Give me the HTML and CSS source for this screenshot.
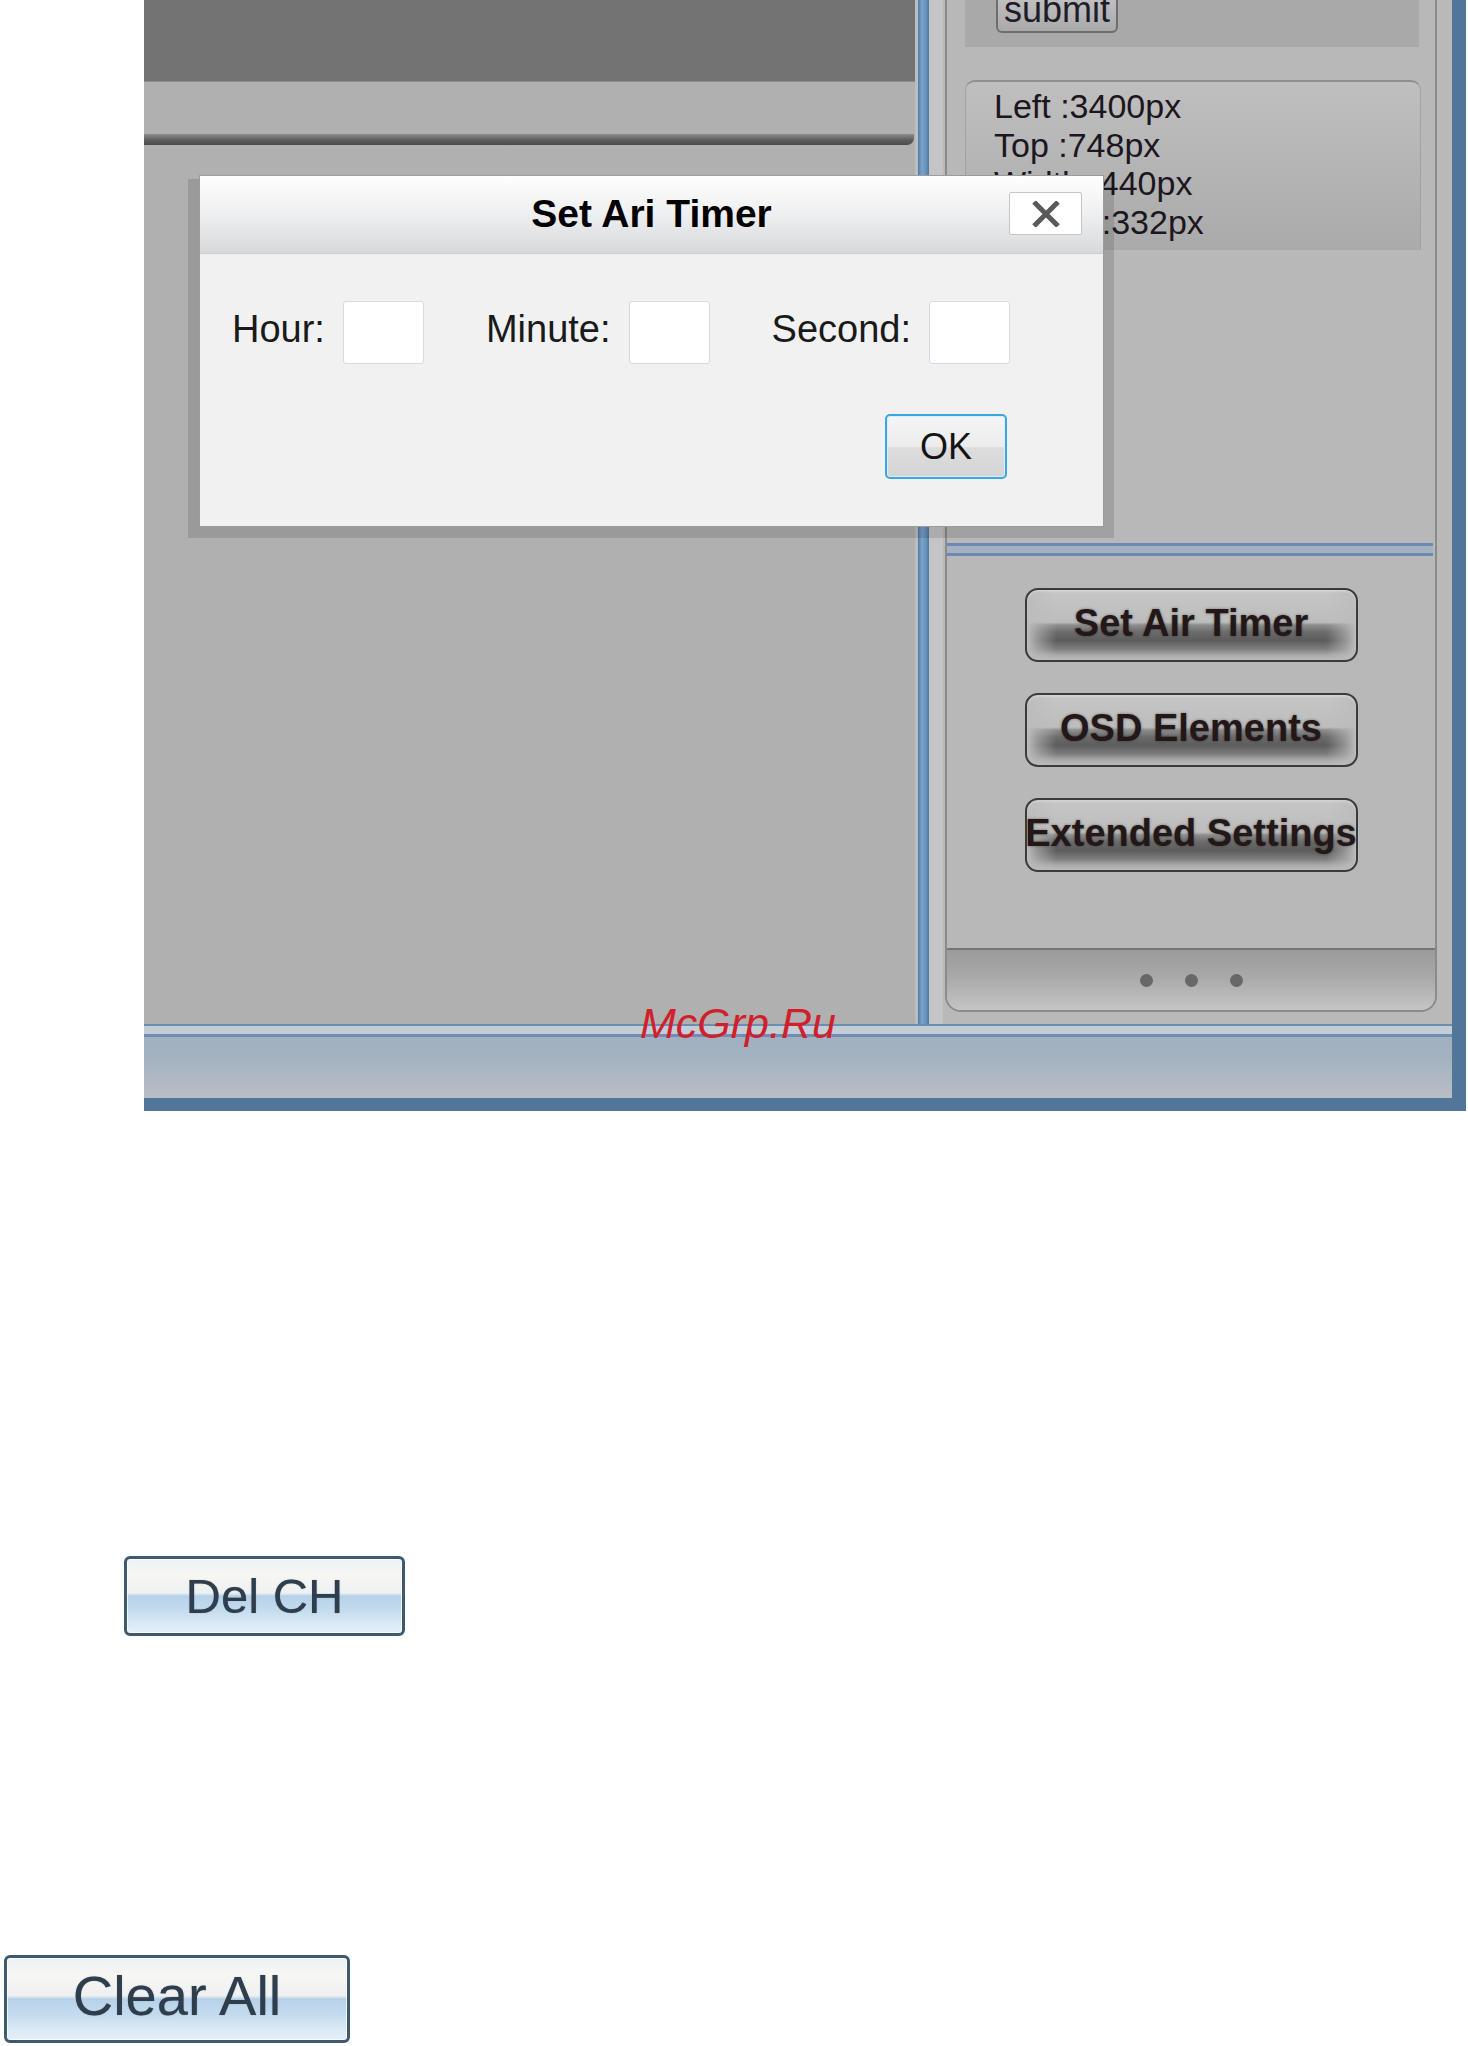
FILE: index.html
```html
<!DOCTYPE html>
<html lang="en">
<head>
<meta charset="utf-8">
<title>Set Ari Timer</title>
<link rel="stylesheet" href="styles.css">
</head>
<body>
<div class="app">
  <div class="workspace">
    <div class="canvas">
      <div class="preview"></div>
      <div class="band"></div>
      <div class="rule"></div>
    </div>
    <div class="splitter"></div>
    <aside class="sidebar">
      <div class="panel">
        <div class="panel-top">
          <div class="submit-box"><button class="submit-btn">submit</button></div>
          <div class="info-box">
            <div class="info-line">Left :3400px</div>
            <div class="info-line">Top :748px</div>
            <div class="info-line">Width :440px</div>
            <div class="info-line">Height :332px</div>
          </div>
        </div>
        <div class="separator"></div>
        <div class="actions">
          <button class="action"><span>Set Air Timer</span></button>
          <button class="action"><span>OSD Elements</span></button>
          <button class="action"><span>Extended Settings</span></button>
        </div>
        <div class="panel-footer">
          <span class="dot"></span><span class="dot"></span><span class="dot"></span>
        </div>
      </div>
    </aside>
  </div>
  <div class="statusbar"></div>

  <div class="dialog-wrap">
    <div class="dialog">
      <div class="dialog-title">
        <span class="title-text">Set Ari Timer</span>
        <button class="close-btn" aria-label="Close">
          <svg width="28" height="26" viewBox="0 0 28 26"><path d="M2 1 L26 25 M26 1 L2 25" stroke="#5a5a5a" stroke-width="5" fill="none"/></svg>
        </button>
      </div>
      <div class="dialog-body">
        <div class="fields">
          <label class="field"><span class="field-label">Hour:</span><input class="field-input" type="text"></label>
          <label class="field"><span class="field-label">Minute:</span><input class="field-input" type="text"></label>
          <label class="field"><span class="field-label">Second:</span><input class="field-input" type="text"></label>
        </div>
        <div class="dialog-actions"><button class="ok-btn">OK</button></div>
      </div>
    </div>
  </div>

  <div class="watermark">McGrp.Ru</div>
</div>

<div class="bottom-actions">
  <button class="blue-btn del-btn">Del CH</button>
  <button class="blue-btn clear-btn">Clear All</button>
</div>
</body>
</html>
```

FILE: styles.css
```css
* { box-sizing: border-box; }

body {
  margin: 0;
  background: #ffffff;
  font-family: "Liberation Sans", Arial, sans-serif;
  color: #1a1a1a;
}

button, input { font-family: inherit; }

.app {
  position: relative;
  margin-left: 144px;
  width: 1322px;
  border-right: 14px solid #52769a;
  border-bottom: 13px solid #52769a;
  display: flex;
  flex-direction: column;
}

.workspace {
  display: flex;
  height: 1024px;
}

/* left canvas */
.canvas {
  width: 774px;
  background: #b0b0b0;
  border-right: 3px solid #bdbdbd;
}
.preview {
  height: 82px;
  width: 771px;
  background: #737373;
  border-bottom: 1px solid #8c8c8c;
}
.band {
  height: 52px;
}
.rule {
  height: 11px;
  width: 770px;
  background: linear-gradient(to bottom, #8e8e8e 0, #777 25%, #5d5d5d 55%, #4b4b4b 100%);
  border-bottom-right-radius: 7px;
}

.splitter {
  width: 11px;
  background: linear-gradient(to right, #4f7ca8 0, #7ca3c9 35%, #6b94bc 70%, #4c77a2 100%);
}

/* sidebar */
.sidebar {
  flex: 1;
  padding: 0 15px 12px 16px;
  background: linear-gradient(to right, #c4c4c4 0, #c4c4c4 14px, #b9b9b9 14px);
  display: flex;
}
.panel {
  flex: 1;
  display: flex;
  flex-direction: column;
  border-left: 2px solid #8b8b8b;
  border-right: 2px solid #8b8b8b;
  border-bottom: 2px solid #8b8b8b;
  border-radius: 0 0 16px 16px;
  overflow: hidden;
  background: #b8b8b8;
}
.panel-top {
  padding: 0 16px 0 18px;
}
.submit-box {
  height: 47px;
  background: #a9a9a9;
  padding-left: 31px;
  overflow: hidden;
}
.submit-btn {
  display: block;
  margin-top: -14px;
  height: 47px;
  padding: 0 6px;
  border: 2px solid #6e6e6e;
  border-radius: 6px;
  background: linear-gradient(to bottom, #c8c8c8, #a9a9a9);
  font-size: 36px;
  line-height: 34px;
  color: #1f1c2a;
}
.info-box {
  margin-top: 33px;
  height: 170px;
  margin-right: -2px;
  border-top: 2px solid #8f8f8f;
  border-left: 1px solid #a2a2a2;
  border-right: 1px solid #a2a2a2;
  border-radius: 10px 10px 0 0;
  background: linear-gradient(to bottom, #bfbfbf, #aaaaaa);
  padding: 5px 0 0 28px;
}
.info-line {
  font-size: 34px;
  line-height: 38.5px;
  color: #1c1620;
  white-space: nowrap;
}

.separator {
  margin-top: 293px;
  margin-right: 2px;
  height: 13px;
  border-top: 3px solid #6a8ab2;
  border-bottom: 3px solid #6a8ab2;
  background: #a7b2c0;
}

.actions {
  display: flex;
  flex-direction: column;
  align-items: center;
  gap: 31px;
  padding-top: 32px;
}
.action {
  width: 333px;
  height: 74px;
  padding: 0;
  display: flex;
  align-items: center;
  justify-content: center;
  overflow: hidden;
  white-space: nowrap;
  border: 2px solid #3b3b3b;
  border-radius: 13px;
  box-shadow: inset 0 2px 2px rgba(255,255,255,0.25);
  background:
    linear-gradient(to right, #bcbcbc 0, rgba(188,188,188,0.6) 3%, rgba(188,188,188,0) 9%, rgba(188,188,188,0) 91%, rgba(188,188,188,0.6) 97%, #bcbcbc 100%),
    linear-gradient(to bottom, #c6c6c6 0%, #bdbdbd 46%, #8e8e8e 50%, #6c6c6c 60%, #5c5c5c 72%, #7c7c7c 84%, #aaaaaa 93%, #bababa 100%);
  font-size: 38px;
  font-weight: bold;
  color: #231717;
  text-shadow: 0 0 3px rgba(0,0,0,0.4);
}
.action span { flex: none; margin-top: -4px; }

.panel-footer {
  margin-top: auto;
  height: 62px;
  border-top: 2px solid #767676;
  background: linear-gradient(to bottom, #9b9b9b, #a9a9a9 45%, #c5c5c5 100%);
  display: flex;
  align-items: center;
  justify-content: center;
  gap: 32px;
}
.dot {
  width: 13px;
  height: 13px;
  border-radius: 50%;
  background: #686868;
}

.statusbar {
  height: 74px;
  background: linear-gradient(to bottom,
    #6d8db3 0, #6d8db3 2px,
    #c4ccd6 2px, #c4ccd6 10px,
    #6d8db3 10px, #6d8db3 13px,
    #a0b0c0 13px, #a4b2c0 45%, #b8bec3 100%);
}

/* dialog */
.dialog-wrap {
  position: absolute;
  left: 55px;
  top: 175px;
  width: 905px;
  z-index: 5;
}
.dialog-wrap::before {
  content: "";
  position: absolute;
  left: -11px;
  right: -10px;
  top: 4px;
  bottom: -11px;
  background: rgba(0,0,0,0.12);
  z-index: -1;
}
.dialog {
  height: 352px;
  border: 1px solid #9c9c9c;
  background: #f1f1f1;
}
.dialog-title {
  height: 78px;
  border-bottom: 1px solid #cdcdcd;
  background: linear-gradient(to bottom, #fefefe 0%, #eeeff0 50%, #d8d9db 100%);
  display: grid;
  grid-template-columns: 1fr auto 1fr;
  align-items: center;
}
.title-text {
  grid-column: 2;
  font-size: 39px;
  font-weight: bold;
  color: #000;
  line-height: 45px;
  margin-top: -2px;
}
.close-btn {
  grid-column: 3;
  justify-self: end;
  align-self: start;
  margin: 16px 21px 0 0;
  width: 73px;
  height: 43px;
  padding: 0;
  border: 1px solid #c6c6c6;
  border-radius: 2px;
  background: #ffffff;
  display: flex;
  align-items: center;
  justify-content: center;
}
.close-btn svg { display: block; }

.dialog-body {
  padding: 47px 96px 0 32px;
}
.fields {
  display: flex;
  align-items: center;
  gap: 62px;
}
.field {
  display: flex;
  align-items: center;
  gap: 18px;
}
.field-label {
  font-size: 38px;
  color: #1a1a1a;
  margin-top: -6px;
}
.field-input {
  width: 81px;
  height: 63px;
  border: 1px solid #d6dae2;
  border-radius: 3px;
  background: #fff;
  padding: 0;
}
.dialog-actions {
  display: flex;
  justify-content: flex-end;
  margin-top: 50px;
}
.ok-btn {
  width: 122px;
  height: 65px;
  padding: 0;
  border: 2px solid #3ba6df;
  border-radius: 5px;
  box-shadow: inset 0 0 0 1px #d9eef9;
  background: linear-gradient(to bottom, #f5f5f5 0%, #ececec 50%, #dddddd 52%, #d4d4d4 100%);
  font-size: 36px;
  color: #141414;
}

.watermark {
  position: absolute;
  left: 496px;
  top: 1002px;
  font-size: 43px;
  line-height: 1;
  font-style: italic;
  color: #d0202c;
  z-index: 6;
}

/* bottom buttons */
.bottom-actions {
  display: flex;
  flex-direction: column;
  align-items: flex-start;
}
.blue-btn {
  display: flex;
  align-items: center;
  justify-content: center;
  padding: 0;
  border: 3px solid #3d5a6f;
  border-radius: 6px;
  box-shadow: inset 0 0 0 1px rgba(255,255,255,0.75);
  background: linear-gradient(to bottom,
    #edf2f6 0%, #f7f6f2 22%, #eef0f2 46%,
    #b6d2e9 50%, #c3dbee 68%, #dbeaf6 88%, #e5f0f8 100%);
  color: #2e3e4d;
  text-shadow: 0 0 1px rgba(46,62,77,0.5);
}
.del-btn {
  margin: 445px 0 0 124px;
  width: 281px;
  height: 80px;
  font-size: 49px;
}
.clear-btn {
  margin: 319px 0 0 4px;
  width: 346px;
  height: 88px;
  font-size: 56px;
  padding-bottom: 8px;
}
```
